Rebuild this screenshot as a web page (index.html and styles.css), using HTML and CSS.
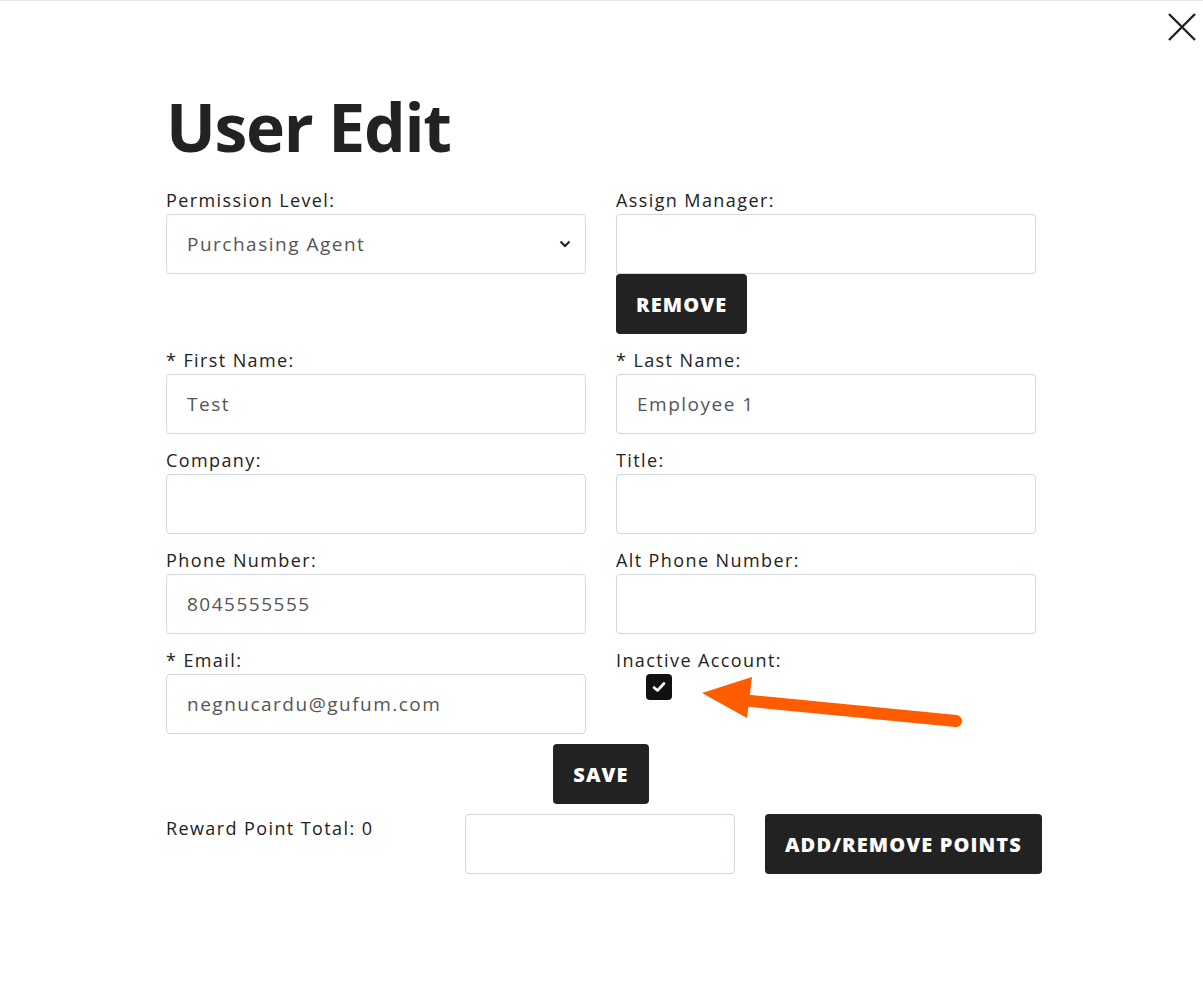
FILE: index.html
```html
<!DOCTYPE html>
<html lang="en">
<head>
    <meta charset="UTF-8">
    <meta name="viewport" content="width=device-width, initial-scale=1.0">
    <title>User Edit</title>
    <link rel="stylesheet" href="styles.css">
</head>
<body>
    <div class="modal">
        <button class="close-button" aria-label="Close">
            <svg width="30" height="30" viewBox="0 0 30 30">
                <path d="M2 2 L28 28 M28 2 L2 28" stroke="#222" stroke-width="2.4" fill="none"/>
            </svg>
        </button>

        <div class="container">
            <h1 class="title">User Edit</h1>

            <div class="form-grid">
                <div class="field">
                    <label>Permission Level:</label>
                    <div class="select-wrap">
                        <select class="input">
                            <option>Purchasing Agent</option>
                        </select>
                        <svg class="chevron" width="12" height="8" viewBox="0 0 12 8">
                            <path d="M1.5 1.5 L6 6 L10.5 1.5" stroke="#222" stroke-width="2" fill="none"/>
                        </svg>
                    </div>
                </div>
                <div class="field">
                    <label>Assign Manager:</label>
                    <input class="input" type="text">
                    <div><button class="dark-button">Remove</button></div>
                </div>

                <div class="field">
                    <label>* First Name:</label>
                    <input class="input" type="text" value="Test">
                </div>
                <div class="field">
                    <label>* Last Name:</label>
                    <input class="input" type="text" value="Employee 1">
                </div>

                <div class="field">
                    <label>Company:</label>
                    <input class="input" type="text">
                </div>
                <div class="field">
                    <label>Title:</label>
                    <input class="input" type="text">
                </div>

                <div class="field">
                    <label>Phone Number:</label>
                    <input class="input" type="text" value="8045555555">
                </div>
                <div class="field">
                    <label>Alt Phone Number:</label>
                    <input class="input" type="text">
                </div>

                <div class="field">
                    <label>* Email:</label>
                    <input class="input" type="text" value="negnucardu@gufum.com">
                </div>
                <div class="field">
                    <label>Inactive Account:</label>
                    <div class="checkbox">
                        <svg width="14" height="12" viewBox="0 0 14 12">
                            <path d="M2 6.5 L5.5 9.5 L12 2.5" stroke="#fff" stroke-width="2.6" fill="none" stroke-linecap="round" stroke-linejoin="round"/>
                        </svg>
                    </div>
                </div>
            </div>

            <div class="save-row">
                <button class="dark-button">Save</button>
            </div>

            <div class="reward-row">
                <div class="reward-label">Reward Point Total: 0</div>
                <input class="input points-input" type="text">
                <button class="dark-button">Add/Remove Points</button>
            </div>
        </div>

        <!-- annotation arrow -->
        <svg class="arrow" width="1203" height="981" viewBox="0 0 1203 981">
            <line x1="956" y1="721" x2="740" y2="700" stroke="#ff5c00" stroke-width="12" stroke-linecap="round"/>
            <polygon points="702,693 752,677 747,718" fill="#ff5c00"/>
        </svg>
    </div>
</body>
</html>
```

FILE: styles.css
```css
body {
    margin: 0;
    padding: 0;
    font-family: "Open Sans", "Liberation Sans", sans-serif;
    color: #222;
    background: #fff;
}

.modal {
    position: relative;
    min-height: 981px;
    padding-right: 1px;
    border-top: 1px solid #e6e6e6;
    box-sizing: border-box;
}

.close-button {
    position: absolute;
    top: 11px;
    right: 6px;
    padding: 0;
    border: none;
    background: none;
    cursor: pointer;
}

.container {
    width: 870px;
    margin: 0 auto;
}

.title {
    margin: 0;
    padding-top: 92px;
    height: 93px;
    font-size: 66px;
    font-weight: 700;
    line-height: 1;
    letter-spacing: -1.3px;
    color: #222;
}

.form-grid {
    display: grid;
    grid-template-columns: 1fr 1fr;
    column-gap: 30px;
    row-gap: 12px;
}

.field label {
    display: block;
    font-size: 18px;
    line-height: 28px;
    letter-spacing: 1.4px;
    color: #222;
}

.input {
    display: block;
    width: 100%;
    height: 60px;
    box-sizing: border-box;
    padding: 0 20px;
    border: 1px solid #d3d8de;
    border-radius: 4px;
    background: #fff;
    font-family: inherit;
    font-size: 19px;
    letter-spacing: 1.5px;
    color: #555;
    outline: none;
}

.select-wrap {
    position: relative;
}

select.input {
    appearance: none;
    -webkit-appearance: none;
}

.chevron {
    position: absolute;
    right: 15px;
    top: 26px;
}

.dark-button {
    flex-shrink: 0;
    height: 60px;
    padding: 0 20px;
    border: none;
    border-radius: 4px;
    background: #222;
    color: #fff;
    font-family: inherit;
    font-size: 20px;
    font-weight: 800;
    letter-spacing: 1.1px;
    text-transform: uppercase;
    white-space: nowrap;
    cursor: pointer;
}

.checkbox {
    width: 26px;
    height: 26px;
    margin-left: 30px;
    border-radius: 4px;
    background: #111;
    display: flex;
    align-items: center;
    justify-content: center;
}

.save-row {
    display: flex;
    justify-content: center;
    margin-top: 10px;
}

.reward-row {
    display: flex;
    align-items: flex-start;
    gap: 30px;
    margin-top: 10px;
}

.reward-label {
    width: 269px;
    flex-shrink: 0;
    font-size: 18px;
    line-height: 27px;
    letter-spacing: 1.4px;
    padding-top: 1px;
}

.points-input {
    width: 270px;
    flex-shrink: 0;
}

.arrow {
    position: absolute;
    top: -1px;
    left: 0;
    pointer-events: none;
}
```
